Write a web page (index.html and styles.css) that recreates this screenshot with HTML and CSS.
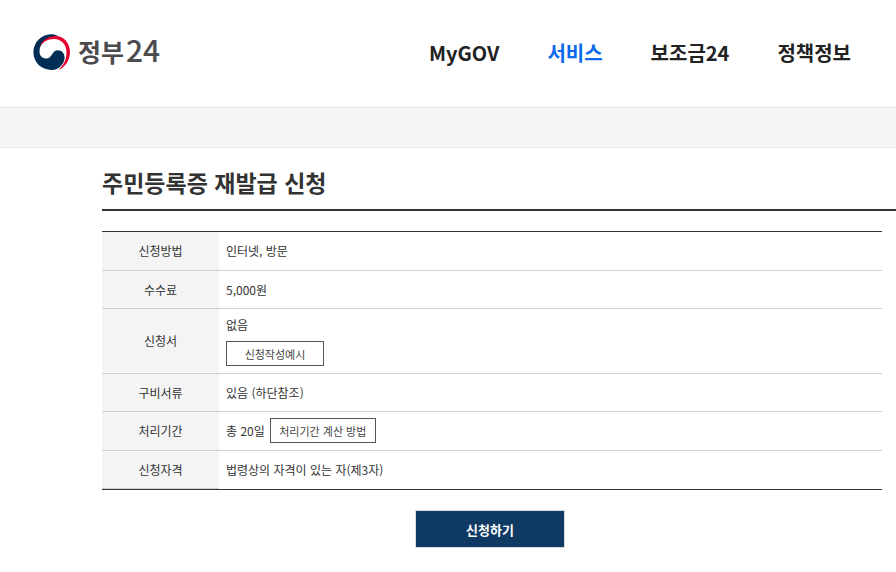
FILE: index.html
```html
<!DOCTYPE html>
<html lang="ko">
<head>
    <meta charset="UTF-8">
    <meta name="viewport" content="width=device-width, initial-scale=1">
    <title>주민등록증 재발급 신청 | 정부24</title>
    <link rel="stylesheet" href="styles.css">
</head>
<body>
    <header class="header">
        <a href="#" class="logo">
            <svg class="logo-mark" viewBox="0 0 38 38" aria-hidden="true">
                <path fill="#002d56" d="M26 2.300C23 .8 20.500 .2 18 .2C8 .2 .4 8.500 .4 18.300C.4 28.500 8.500 36 18.500 36C27 36 31.600 29 31.600 23.500C31.600 19 28.500 16.200 25 16.200C18.500 16.200 19.500 24.500 13 24.500C9 24.500 6.500 21.500 6.500 17.500C6.500 9.500 14 2.600 26 2.300Z"/>
                <path fill="#e6002d" d="M6.500 13C9 6 15.500 2 22.500 2C31 2 37 9.500 37 18C37 27 31.500 33.500 25.500 36C30.500 31 33.500 26 33.500 18.500C33.500 10.500 28.500 5 21 5C14.500 5 9.500 8 6.500 13Z"/>
            </svg>
            <span class="logo-text">정부<span class="logo-num">24</span></span>
        </a>
        <nav class="nav">
            <a href="#">MyGOV</a>
            <a href="#" class="active">서비스</a>
            <a href="#">보조금24</a>
            <a href="#">정책정보</a>
        </nav>
    </header>
    <div class="location-bar"></div>

    <main class="content">
        <h1 class="title">주민등록증 재발급 신청</h1>

        <div class="service">
            <table class="info">
                <tr>
                    <th scope="row">신청방법</th>
                    <td>인터넷, 방문</td>
                </tr>
                <tr>
                    <th scope="row">수수료</th>
                    <td>5,000원</td>
                </tr>
                <tr>
                    <th scope="row">신청서</th>
                    <td>
                        <div class="stack">
                            <span>없음</span>
                            <button type="button" class="btn-line btn-example">신청작성예시</button>
                        </div>
                    </td>
                </tr>
                <tr>
                    <th scope="row">구비서류</th>
                    <td>있음 (하단참조)</td>
                </tr>
                <tr>
                    <th scope="row">처리기간</th>
                    <td>
                        <div class="inline">
                            <span>총 20일</span>
                            <button type="button" class="btn-line btn-period">처리기간 계산 방법</button>
                        </div>
                    </td>
                </tr>
                <tr>
                    <th scope="row">신청자격</th>
                    <td>법령상의 자격이 있는 자(제3자)</td>
                </tr>
            </table>

            <div class="actions">
                <button type="button" class="btn-apply">신청하기</button>
            </div>
        </div>
    </main>
</body>
</html>
```
FILE: styles.css
```css
* {
    box-sizing: border-box;
}

body {
    margin: 0;
    background: #fff;
    color: #333;
    font-family: "Noto Sans CJK KR", sans-serif;
    font-size: 12px;
    line-height: 18px;
}

a {
    color: inherit;
    text-decoration: none;
}

button {
    font-family: inherit;
    cursor: pointer;
}

/* header */
.header {
    display: flex;
    align-items: center;
    justify-content: space-between;
    height: 107px;
    padding: 0 45px 2px 33px;
}

.logo {
    display: flex;
    align-items: center;
    gap: 7px;
}

.logo-mark {
    width: 38px;
    height: 38px;
}

.logo-text {
    padding-bottom: 6px;
    color: #4b4b4d;
    font-size: 25px;
    font-weight: 700;
    line-height: 36px;
}

.logo-num {
    margin-left: 2px;
    font-size: 30px;
    font-weight: 500;
}

.nav {
    display: flex;
    gap: 48px;
    color: #222;
    font-size: 20px;
    font-weight: 700;
    line-height: 30px;
}

.nav .active {
    color: #0b69ea;
}

.location-bar {
    height: 41px;
    background: #f6f4f5;
    border-top: 1px solid #e1e1e6;
    border-bottom: 1px solid #e8e6e7;
}

/* content */
.content {
    padding: 16px 0 24px 102px;
}

.title {
    margin: 0 0 20px;
    padding-bottom: 9px;
    border-bottom: 2px solid #333;
    font-size: 23px;
    font-weight: 700;
    line-height: 36px;
}

.service {
    margin-right: 14px;
}

.info {
    width: 100%;
    border-top: 1px solid #333;
    border-bottom: 1px solid #333;
    border-spacing: 0;
}

.info th,
.info td {
    height: 38px;
    padding: 5px 7px;
    border-bottom: 1px solid #d0d0d0;
    vertical-align: middle;
}

.info th {
    width: 15%;
    background: #f4f4f4;
    font-weight: 400;
    text-align: center;
}

.info td {
    text-align: left;
}

.info tr:first-child td {
    height: 39px;
}

.info tr:last-child td {
    border-bottom: 0;
}

.stack {
    display: flex;
    flex-direction: column;
    align-items: flex-start;
    gap: 7px;
    padding: 2px 0;
}

.inline {
    display: flex;
    align-items: center;
    gap: 5px;
    padding: 1px 0 2px;
}

.btn-line {
    height: 25px;
    padding: 0;
    background: #fff;
    border: 1px solid #555;
    color: #444;
    font-size: 11px;
}

.btn-example {
    width: 98px;
}

.btn-period {
    width: 106px;
}

.actions {
    display: flex;
    justify-content: center;
    padding: 20px 4px 0 0;
}

.btn-apply {
    width: 150px;
    height: 38px;
    background: #0f3a63;
    border: 1px solid #d5dbe1;
    color: #fff;
    font-size: 13px;
    font-weight: 700;
}
```
